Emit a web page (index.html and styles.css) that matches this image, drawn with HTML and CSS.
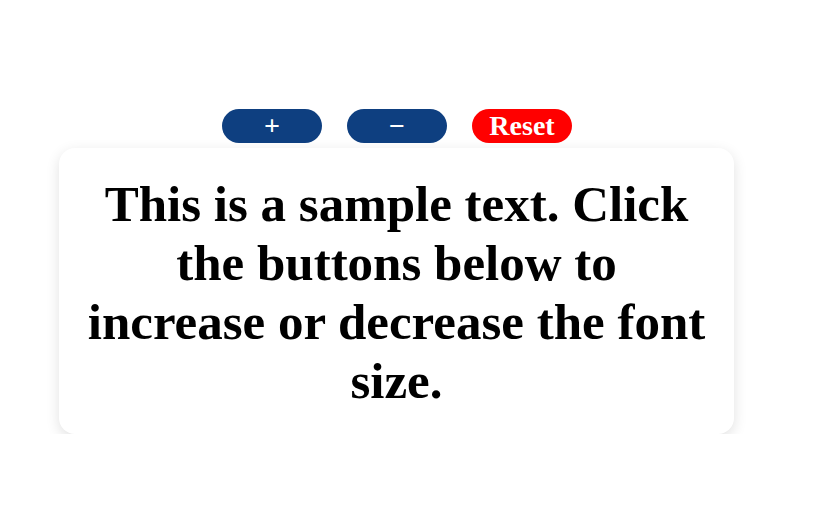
FILE: index.html
```html
<!DOCTYPE html>
<html>
<head>
<meta charset="utf-8">
<link rel="stylesheet" href="styles.css">
</head>
<body>
<div class="wrap">
  <div class="controls">
    <button class="btn btn-blue">+</button>
    <button class="btn btn-blue">&minus;</button>
    <button class="btn btn-red">Reset</button>
  </div>
  <div class="card">
    <p class="sample">This is a sample text. Click the buttons below to increase or decrease the font size.</p>
  </div>
</div>
</body>
</html>
```
FILE: styles.css
```css
html, body {
  margin: 0;
  padding: 0;
  background: #ffffff;
}
.wrap {
  width: 675px;
  margin-left: 59px;
  padding-top: 109px;
  font-family: "Liberation Serif", "Times New Roman", serif;
}
.controls {
  display: flex;
  justify-content: center;
  gap: 25px;
  padding-left: 1px;
}
.btn {
  width: 100px;
  height: 34px;
  border: none;
  border-radius: 17px;
  color: #ffffff;
  font-family: "Liberation Serif", "Times New Roman", serif;
  font-weight: bold;
  font-size: 28px;
  line-height: 1;
  padding: 0;
  display: flex;
  align-items: center;
  justify-content: center;
}
.btn-blue {
  background: #0e3f80;
}
.btn-red {
  background: #ff0000;
}
.card {
  margin-top: 5px;
  background: #ffffff;
  border-radius: 16px;
  box-shadow: 0 4px 14px rgba(0, 0, 0, 0.12);
  padding: 27px 26px 23px;
}
.sample {
  margin: 0;
  text-align: center;
  font-weight: bold;
  font-size: 51px;
  line-height: 59px;
  color: #000000;
}
```
